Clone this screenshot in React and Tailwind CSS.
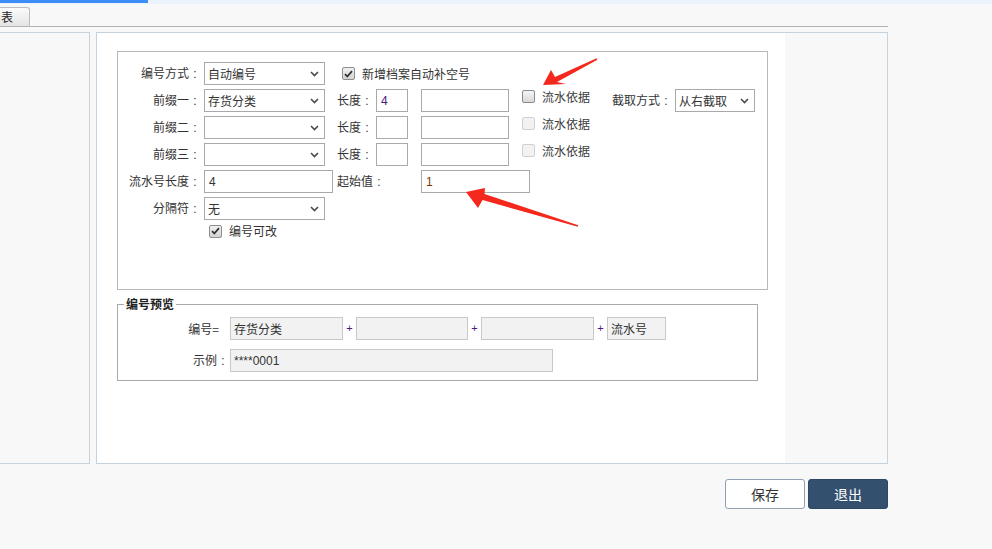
import React from "react";

function Chevron() {
  return (
    <svg width="9" height="6" viewBox="0 0 9 6" className="shrink-0">
      <path d="M1 1l3.5 3.5L8 1" stroke="#4a4a4a" strokeWidth="1.6" fill="none" />
    </svg>
  );
}

function C({ text }) {
  return (
    <>
      {text}
      <span className="inline-block w-[12px] text-center font-['Liberation_Sans',sans-serif]">:</span>
    </>
  );
}

function Select({ w, value }) {
  return (
    <div className={`flex h-[23px] items-center justify-between border border-[#a9a9a9] bg-white pl-[3px] pr-[5px] ${w}`}>
      <span className="leading-none">{value}</span>
      <Chevron />
    </div>
  );
}

function Input({ w, value, color }) {
  return (
    <div className={`flex h-[23px] items-center border border-[#a9a9a9] bg-white pl-[4px] ${w} ${color || "text-[#333]"}`}>
      <span className="font-['Liberation_Sans',sans-serif] leading-none">{value}</span>
    </div>
  );
}

function Check({ kind }) {
  if (kind === "checked") {
    return (
      <div className="flex h-[13px] w-[13px] shrink-0 items-center justify-center rounded-[2px] border border-[#8e8e8e] bg-gradient-to-b from-[#f0f0f0] to-[#d4d4d4]">
        <svg width="9" height="8" viewBox="0 0 9 8">
          <path d="M1 4.2l2.3 2.3L8 1.2" stroke="#333" strokeWidth="1.8" fill="none" />
        </svg>
      </div>
    );
  }
  if (kind === "disabled") {
    return <div className="h-[13px] w-[13px] shrink-0 rounded-[2px] border border-[#d0d0d0] bg-[#f2f2f2]" />;
  }
  return <div className="h-[13px] w-[13px] shrink-0 rounded-[2px] border border-[#8a8a8a] bg-gradient-to-b from-[#f6f6f6] to-[#d8d8d8]" />;
}

function Label({ text }) {
  return (
    <div className="w-[86px] shrink-0 pr-[3px] text-right">
      <C text={text} />
    </div>
  );
}

function PrefixRow({ label, value, len, lenColor, check, extra }) {
  return (
    <div className="flex h-[23px] items-center">
      <Label text={label} />
      <Select w="w-[121px]" value={value} />
      <span className="ml-[12px] w-[36px]">
        <C text="长度" />
      </span>
      <Input w="ml-[3px] w-[32px]" value={len} color={lenColor} />
      <Input w="ml-[13px] w-[88px]" value="" />
      <div className="ml-[13px] flex items-center self-start pt-[1px]">
        <Check kind={check} />
        <span className="ml-[7px] leading-[13px] text-[#3a3a3a]">流水依据</span>
      </div>
      {extra}
    </div>
  );
}

function PreviewBox({ w, value }) {
  return (
    <div className={`flex h-[23px] items-center border border-[#c8c8c8] bg-[#f2f2f2] pl-[3px] ${w}`}>
      <span className="leading-none">{value}</span>
    </div>
  );
}

function Plus() {
  return <span className="w-[13px] text-center font-['Liberation_Sans',sans-serif] text-[11px] text-[#4b1a7a]">+</span>;
}

export default function App() {
  return (
    <div className="relative h-[549px] w-[992px] overflow-hidden bg-[#f8f8f8] font-['Noto_Sans_CJK_SC',sans-serif] text-[12px] text-[#333]">
      {/* top progress bar */}
      <div className="flex h-[4px] bg-[#ecf2fb]">
        <div className="h-[3px] w-[148px] bg-[#3c8df6]" />
      </div>

      {/* tab strip */}
      <div className="mt-[3px] flex w-[888px] flex-col">
        <div className="flex h-[19px] w-[30px] items-center rounded-tr-[3px] border border-b-0 border-l-0 border-[#bdbdbd] bg-gradient-to-b from-[#fbfbfb] to-[#e4e4e4] pl-[1px]">
          <span className="leading-none text-[#222]">表</span>
        </div>
        <div className="h-px w-[888px] bg-[#b3b3b3]" />
      </div>

      {/* panels */}
      <div className="mt-[5px] flex h-[432px] w-[888px] gap-[6px]">
        <div className="w-[90px] shrink-0 border border-l-0 border-[#c5d3df] bg-[#f8f8f8]" />
        <div className="flex flex-1 border border-[#c5d3df]">
          <div className="w-[688px] bg-white pl-[20px] pt-[18px]">
            {/* settings box */}
            <div className="flex h-[239px] w-[651px] flex-col gap-[4px] border border-[#b8b8b8] pt-[10px]">
              <div className="flex h-[23px] items-center">
                <Label text="编号方式" />
                <Select w="w-[121px]" value="自动编号" />
                <div className="ml-[17px] flex items-center">
                  <Check kind="checked" />
                  <span className="ml-[7px] leading-none">新增档案自动补空号</span>
                </div>
              </div>
              <PrefixRow
                label="前缀一"
                value="存货分类"
                len="4"
                lenColor="text-[#4b1a7a]"
                check="normal"
                extra={
                  <div className="flex items-center">
                    <span className="ml-[22px] w-[60px]">
                      <C text="截取方式" />
                    </span>
                    <Select w="ml-[3px] w-[80px]" value="从右截取" />
                  </div>
                }
              />
              <PrefixRow label="前缀二" value="" len="" check="disabled" />
              <PrefixRow label="前缀三" value="" len="" check="disabled" />
              <div className="flex h-[23px] items-center">
                <Label text="流水号长度" />
                <Input w="w-[129px]" value="4" />
                <span className="ml-[4px] w-[48px]">
                  <C text="起始值" />
                </span>
                <Input w="ml-[36px] w-[109px]" value="1" color="text-[#7a3a05]" />
              </div>
              <div className="flex h-[23px] items-center">
                <Label text="分隔符" />
                <Select w="w-[121px]" value="无" />
              </div>
              <div className="flex h-[14px] items-center pl-[91px]">
                <Check kind="checked" />
                <span className="ml-[7px] leading-none">编号可改</span>
              </div>
            </div>

            {/* preview fieldset */}
            <fieldset className="mt-[7px] w-[641px] border border-[#a9a9a9] pb-[8px]">
              <legend className="ml-[6px] px-[2px] text-[12px] font-bold leading-[14px] text-[#222]">编号预览</legend>
              <div className="mt-[6px] flex h-[23px] items-center">
                <div className="w-[112px] pr-[11px] text-right">编号=</div>
                <PreviewBox w="w-[113px]" value="存货分类" />
                <Plus />
                <PreviewBox w="w-[112px]" value="" />
                <Plus />
                <PreviewBox w="w-[113px]" value="" />
                <Plus />
                <PreviewBox w="w-[59px]" value="流水号" />
              </div>
              <div className="mt-[9px] flex h-[23px] items-center">
                <div className="w-[112px] pr-[1px] text-right">
                  <C text="示例" />
                </div>
                <PreviewBox w="w-[323px]" value={<span className="font-['Liberation_Sans',sans-serif]">****0001</span>} />
              </div>
            </fieldset>
          </div>
          <div className="flex-1 bg-[#f8f8f8]" />
        </div>
      </div>

      {/* buttons */}
      <div className="mt-[15px] flex w-[888px] justify-end gap-[3px]">
        <button className="h-[30px] w-[80px] rounded-[3px] border border-[#8fa0b4] bg-white text-[14px] text-[#333]">保存</button>
        <button className="h-[30px] w-[80px] rounded-[3px] border border-[#2c4765] bg-[#33506f] text-[14px] text-white">退出</button>
      </div>

      {/* red annotation arrows */}
      <svg className="pointer-events-none absolute left-0 top-0" width="992" height="549">
        <polygon
          fill="#f4281c"
          points="543,85 551,70 555,77 596.6,58.3 597.4,59.7 557,82 566,84"
        />
        <polygon
          fill="#f4281c"
          points="466,192 485,188 484.5,194 578.2,225.2 577.8,226.8 482.5,200 478,208"
        />
      </svg>
    </div>
  );
}
